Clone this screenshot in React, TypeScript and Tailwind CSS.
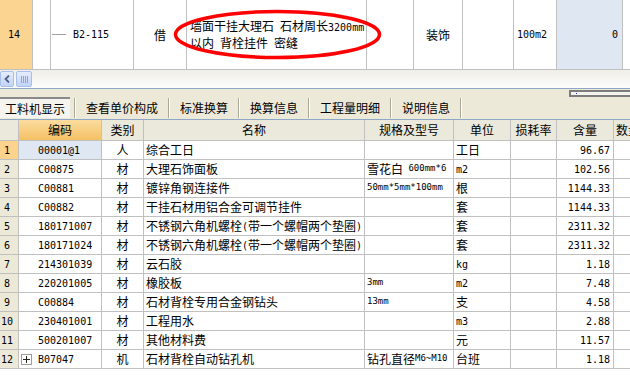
import { type ReactNode } from 'react';

const cjk = "font-['Noto_Sans_CJK_SC',sans-serif]";
const mono = "font-['DejaVu_Sans_Mono',monospace]";

// split text into ascii / cjk runs so ascii gets the narrow mono face
function Mixed({ text, ascii = 'text-[10px]' }: { text: string; ascii?: string }) {
  const parts = text.split(/([\x00-\x7f]+)/).filter(Boolean);
  return (
    <>
      {parts.map((p, i) =>
        /^[\x00-\x7f]+$/.test(p) ? (
          <span key={i} className={`${mono} ${ascii} whitespace-pre`}>{p}</span>
        ) : (
          <span key={i} className={`${cjk} text-[12px]`}>{p}</span>
        )
      )}
    </>
  );
}

interface Item {
  code: string;
  cat: string;
  name: string;
  spec?: string;
  unit: string;
  qty: string;
  expand?: boolean;
}

const items: Item[] = [
  { code: '00001@1', cat: '人', name: '综合工日', unit: '工日', qty: '96.67' },
  { code: 'C00875', cat: '材', name: '大理石饰面板', spec: '雪花白 600mm*6', unit: 'm2', qty: '102.56' },
  { code: 'C00881', cat: '材', name: '镀锌角钢连接件', spec: '50mm*5mm*100mm', unit: '根', qty: '1144.33' },
  { code: 'C00882', cat: '材', name: '干挂石材用铝合金可调节挂件', unit: '套', qty: '1144.33' },
  { code: '180171007', cat: '材', name: '不锈钢六角机螺栓(带一个螺帽两个垫圈)', unit: '套', qty: '2311.32' },
  { code: '180171024', cat: '材', name: '不锈钢六角机螺栓(带一个螺帽两个垫圈)', unit: '套', qty: '2311.32' },
  { code: '214301039', cat: '材', name: '云石胶', unit: 'kg', qty: '1.18' },
  { code: '220201005', cat: '材', name: '橡胶板', spec: '3mm', unit: 'm2', qty: '7.48' },
  { code: 'C00884', cat: '材', name: '石材背栓专用合金钢钻头', spec: '13mm', unit: '支', qty: '4.58' },
  { code: '230401001', cat: '材', name: '工程用水', unit: 'm3', qty: '2.88' },
  { code: '500201007', cat: '材', name: '其他材料费', unit: '元', qty: '11.57' },
  { code: 'B07047', cat: '机', name: '石材背栓自动钻孔机', spec: '钻孔直径M6~M10', unit: '台班', qty: '1.18', expand: true },
];

const tabs = ['查看单价构成', '标准换算', '换算信息', '工程量明细', '说明信息'];

function Cell({ className = '', children }: { className?: string; children?: ReactNode }) {
  return (
    <div className={`flex h-full shrink-0 items-center overflow-hidden whitespace-nowrap border-r border-[#c0c0c0] ${className}`}>
      {children}
    </div>
  );
}

function Sep() {
  return <div className="h-[20px] w-[2px] shrink-0 border-l border-[#aca899] bg-white" />;
}

export default function App() {
  return (
    <div className="flex h-[386px] w-[630px] flex-col overflow-hidden bg-white text-black">
      {/* selected quota row */}
      <div className="relative flex h-[70px] shrink-0 border-b border-[#c0c0c0]">
        <Cell className={`w-[33px] bg-[#fbd491] pl-[8px] ${mono} text-[10px]`}>14</Cell>
        <Cell className="w-[18px]" />
        <Cell className="w-[83px]">
          <div className="ml-[1px] h-px w-[14px] bg-[#a0a0a0]" />
          <span className={`ml-[7px] ${mono} text-[10px]`}>B2-115</span>
        </Cell>
        <Cell className={`w-[53px] justify-center ${cjk} text-[12px]`}>借</Cell>
        <Cell className="w-[180px] pl-[3px]">
          <div className="flex flex-col leading-[14px]">
            <div><Mixed text="墙面干挂大理石 石材周长3200mm" /></div>
            <div><Mixed text="以内 背栓挂件 密缝" /></div>
          </div>
        </Cell>
        <Cell className="w-[47px]" />
        <Cell className={`w-[49px] justify-center ${cjk} text-[12px]`}>装饰</Cell>
        <Cell className="w-[51px]" />
        <Cell className={`w-[43px] pl-[3px] ${mono} text-[10px]`}>100m2</Cell>
        <Cell className={`w-[66px] justify-end bg-[#dfe7f3] pr-[4px] ${mono} text-[10px]`}>0</Cell>
        <div className="flex-1" />
        <svg className="pointer-events-none absolute left-0 top-0" width="630" height="70">
          <ellipse cx="277.5" cy="34.5" rx="102" ry="23" fill="none" stroke="#ff0000" strokeWidth="3.5" />
        </svg>
      </div>

      {/* horizontal scrollbar */}
      <div className="flex h-[18px] shrink-0 items-center bg-linear-to-b from-[#efeee7] to-[#fdfdfb]">
        <div className="flex h-[16px] w-[14px] items-center justify-center rounded-[2px] border border-[#a9bfeb] bg-linear-to-b from-[#e6edfd] to-[#c2d3f7]">
          <svg width="6" height="8" viewBox="0 0 6 8">
            <path d="M5 0.5 L1.5 4 L5 7.5" fill="none" stroke="#4d6185" strokeWidth="1.8" />
          </svg>
        </div>
        <div className="ml-[2px] flex h-[16px] w-[16px] items-center justify-center gap-[1px] rounded-[2px] border border-[#a9bfeb] bg-linear-to-b from-[#e6edfd] to-[#c2d3f7]">
          <div className="h-[7px] w-px bg-[#8ba3d6]" />
          <div className="h-[7px] w-px bg-[#8ba3d6]" />
          <div className="h-[7px] w-px bg-[#8ba3d6]" />
          <div className="h-[7px] w-px bg-[#8ba3d6]" />
        </div>
      </div>
      <div className="h-px shrink-0 bg-[#8fa7c6]" />

      {/* tab strip */}
      <div className={`flex h-[30px] shrink-0 items-end bg-[#ece9d8] pb-[1px] ${cjk} text-[12px]`}>
        <div className="flex h-[21px] w-[70px] shrink-0 items-center border-t-2 border-[#8a8a8a] bg-[#f5f4ef] pl-[5px] leading-none">
          工料机显示
        </div>
        <div className="ml-[4px] flex items-center">
          <Sep />
          {tabs.map((t) => (
            <div key={t} className="flex items-center">
              <div className="px-[10px] leading-none">{t}</div>
              <Sep />
            </div>
          ))}
        </div>
        <div className="ml-auto mt-[1px] flex h-[7px] w-[61px] self-start border-y-2 border-l-2 border-[#7c7c7c] bg-[#f4f3ee] pl-[5px] pt-[1px]">
          <div className="h-px w-px bg-[#1a2bd0]" />
        </div>
      </div>
      <div className="h-px shrink-0 bg-[#8fa7c6]" />

      {/* header */}
      <div className={`flex h-[21px] shrink-0 border-b border-[#c0c0c0] bg-[#ebe9dc] ${cjk} text-[12px]`}>
        <Cell className="w-[19px]" />
        <Cell className="w-[83px] justify-center bg-linear-to-b from-[#fbdc9f] to-[#f4c062]">编码</Cell>
        <Cell className="w-[42px] justify-center">类别</Cell>
        <Cell className="w-[221px] justify-center">名称</Cell>
        <Cell className="w-[89px] justify-center">规格及型号</Cell>
        <Cell className="w-[57px] justify-center">单位</Cell>
        <Cell className="w-[46px] justify-center">损耗率</Cell>
        <Cell className="w-[57px] justify-center">含量</Cell>
        <div className="flex items-center overflow-hidden whitespace-nowrap pl-[2px]">数量</div>
      </div>

      {/* body */}
      {items.map((it, i) => (
        <div key={i} className="flex h-[19px] shrink-0 border-b border-[#c0c0c0]">
          <Cell className={`w-[19px] justify-center pr-[4px] ${mono} text-[10px] ${i === 0 ? 'bg-[#fbd38c]' : 'bg-[#ece9d8]'}`}>
            {i + 1}
          </Cell>
          <Cell className={`w-[83px] ${i === 0 ? 'bg-[#dfe7f3]' : ''}`}>
            {it.expand ? (
              <div className="ml-[2px] mr-[6px] flex h-[11px] w-[11px] items-center justify-center border border-[#9c9c9c] bg-white">
                <svg width="7" height="7" viewBox="0 0 7 7">
                  <path d="M0 3.5 H7 M3.5 0 V7" stroke="#222" strokeWidth="1" />
                </svg>
              </div>
            ) : (
              <div className="w-[19px]" />
            )}
            <span className={`${mono} text-[10px]`}>{it.code}</span>
          </Cell>
          <Cell className={`w-[42px] justify-center ${cjk} text-[12px]`}>{it.cat}</Cell>
          <Cell className="w-[221px] pl-[2px]">
            <Mixed text={it.name} />
          </Cell>
          <Cell className="w-[89px] pl-[2px]">
            {it.spec && <Mixed text={it.spec} ascii="text-[9px]" />}
          </Cell>
          <Cell className="w-[57px] pl-[2px]">
            <Mixed text={it.unit} />
          </Cell>
          <Cell className="w-[46px]" />
          <Cell className={`w-[57px] justify-end pr-[3px] ${mono} text-[10px]`}>{it.qty}</Cell>
          <div className="flex-1" />
        </div>
      ))}
      <div className="flex-1 bg-white" />
    </div>
  );
}
